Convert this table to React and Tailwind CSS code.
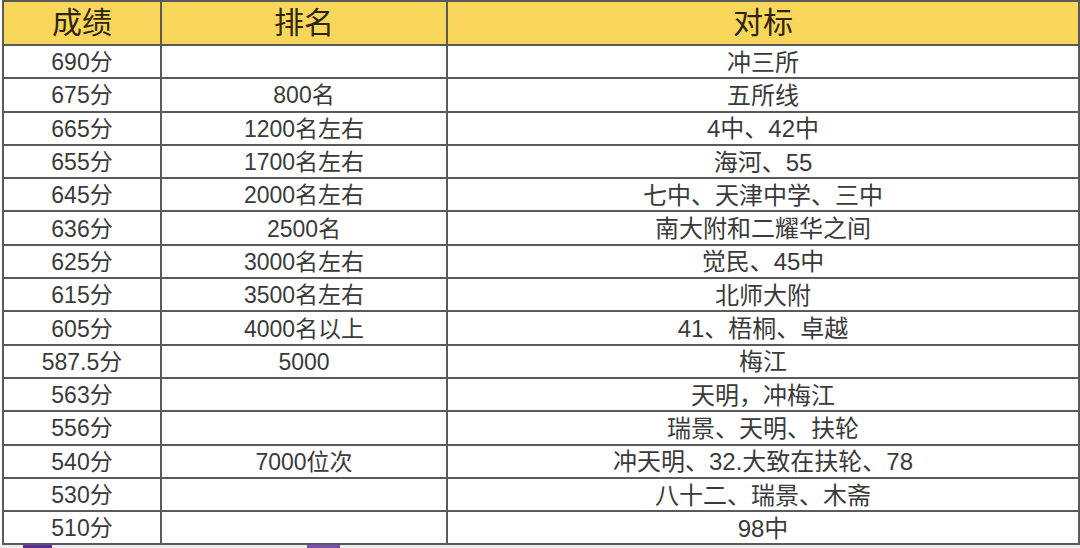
const rows = [
  ['690分', '', '冲三所'],
  ['675分', '800名', '五所线'],
  ['665分', '1200名左右', '4中、42中'],
  ['655分', '1700名左右', '海河、55'],
  ['645分', '2000名左右', '七中、天津中学、三中'],
  ['636分', '2500名', '南大附和二耀华之间'],
  ['625分', '3000名左右', '觉民、45中'],
  ['615分', '3500名左右', '北师大附'],
  ['605分', '4000名以上', '41、梧桐、卓越'],
  ['587.5分', '5000', '梅江'],
  ['563分', '', '天明，冲梅江'],
  ['556分', '', '瑞景、天明、扶轮'],
  ['540分', '7000位次', '冲天明、32.大致在扶轮、78'],
  ['530分', '', '八十二、瑞景、木斋'],
  ['510分', '', '98中'],
];

const App = () => {
  return (
    <div
      className="w-[1080px] h-[548px] bg-white overflow-hidden"
      style={{ fontFamily: '"Liberation Sans", "Noto Sans CJK SC", sans-serif' }}
    >
      <div className="pl-[2px] pr-[2px]">
        <table className="w-[1076px] table-fixed border-collapse">
          <colgroup>
            <col className="w-[158px]" />
            <col className="w-[286px]" />
            <col className="w-[632px]" />
          </colgroup>
          <thead>
            {/* Header row */}
            <tr className="h-[44px] bg-[#f8d65a] text-[#2d2510] text-[30px] leading-none">
              <th className="border-2 border-[#5a5a5a] font-normal">成绩</th>
              <th className="border-2 border-[#5a5a5a] font-normal">排名</th>
              <th className="border-2 border-[#5a5a5a] font-normal">对标</th>
            </tr>
          </thead>
          <tbody>
            {rows.map(([score, rank, target]) => (
              <tr key={score} className="h-[33.3px] text-[#3a3a3a] leading-none">
                <td className="border-2 border-[#5a5a5a] text-center text-[23px] pt-[2px]">{score}</td>
                <td className="border-2 border-[#5a5a5a] text-center text-[23px] pt-[2px]">{rank}</td>
                <td className="border-2 border-[#5a5a5a] text-center text-[24px] pt-[2px]">{target}</td>
              </tr>
            ))}
          </tbody>
        </table>
      </div>
      {/* Strip below table */}
      <div className="h-[4px] bg-[#ececec] flex">
        <div className="ml-[23px] w-[29px] bg-[#5b2ba0]" />
        <div className="ml-[255px] w-[33px] bg-[#7a4fb0]" />
      </div>
    </div>
  );
};

export default App;
